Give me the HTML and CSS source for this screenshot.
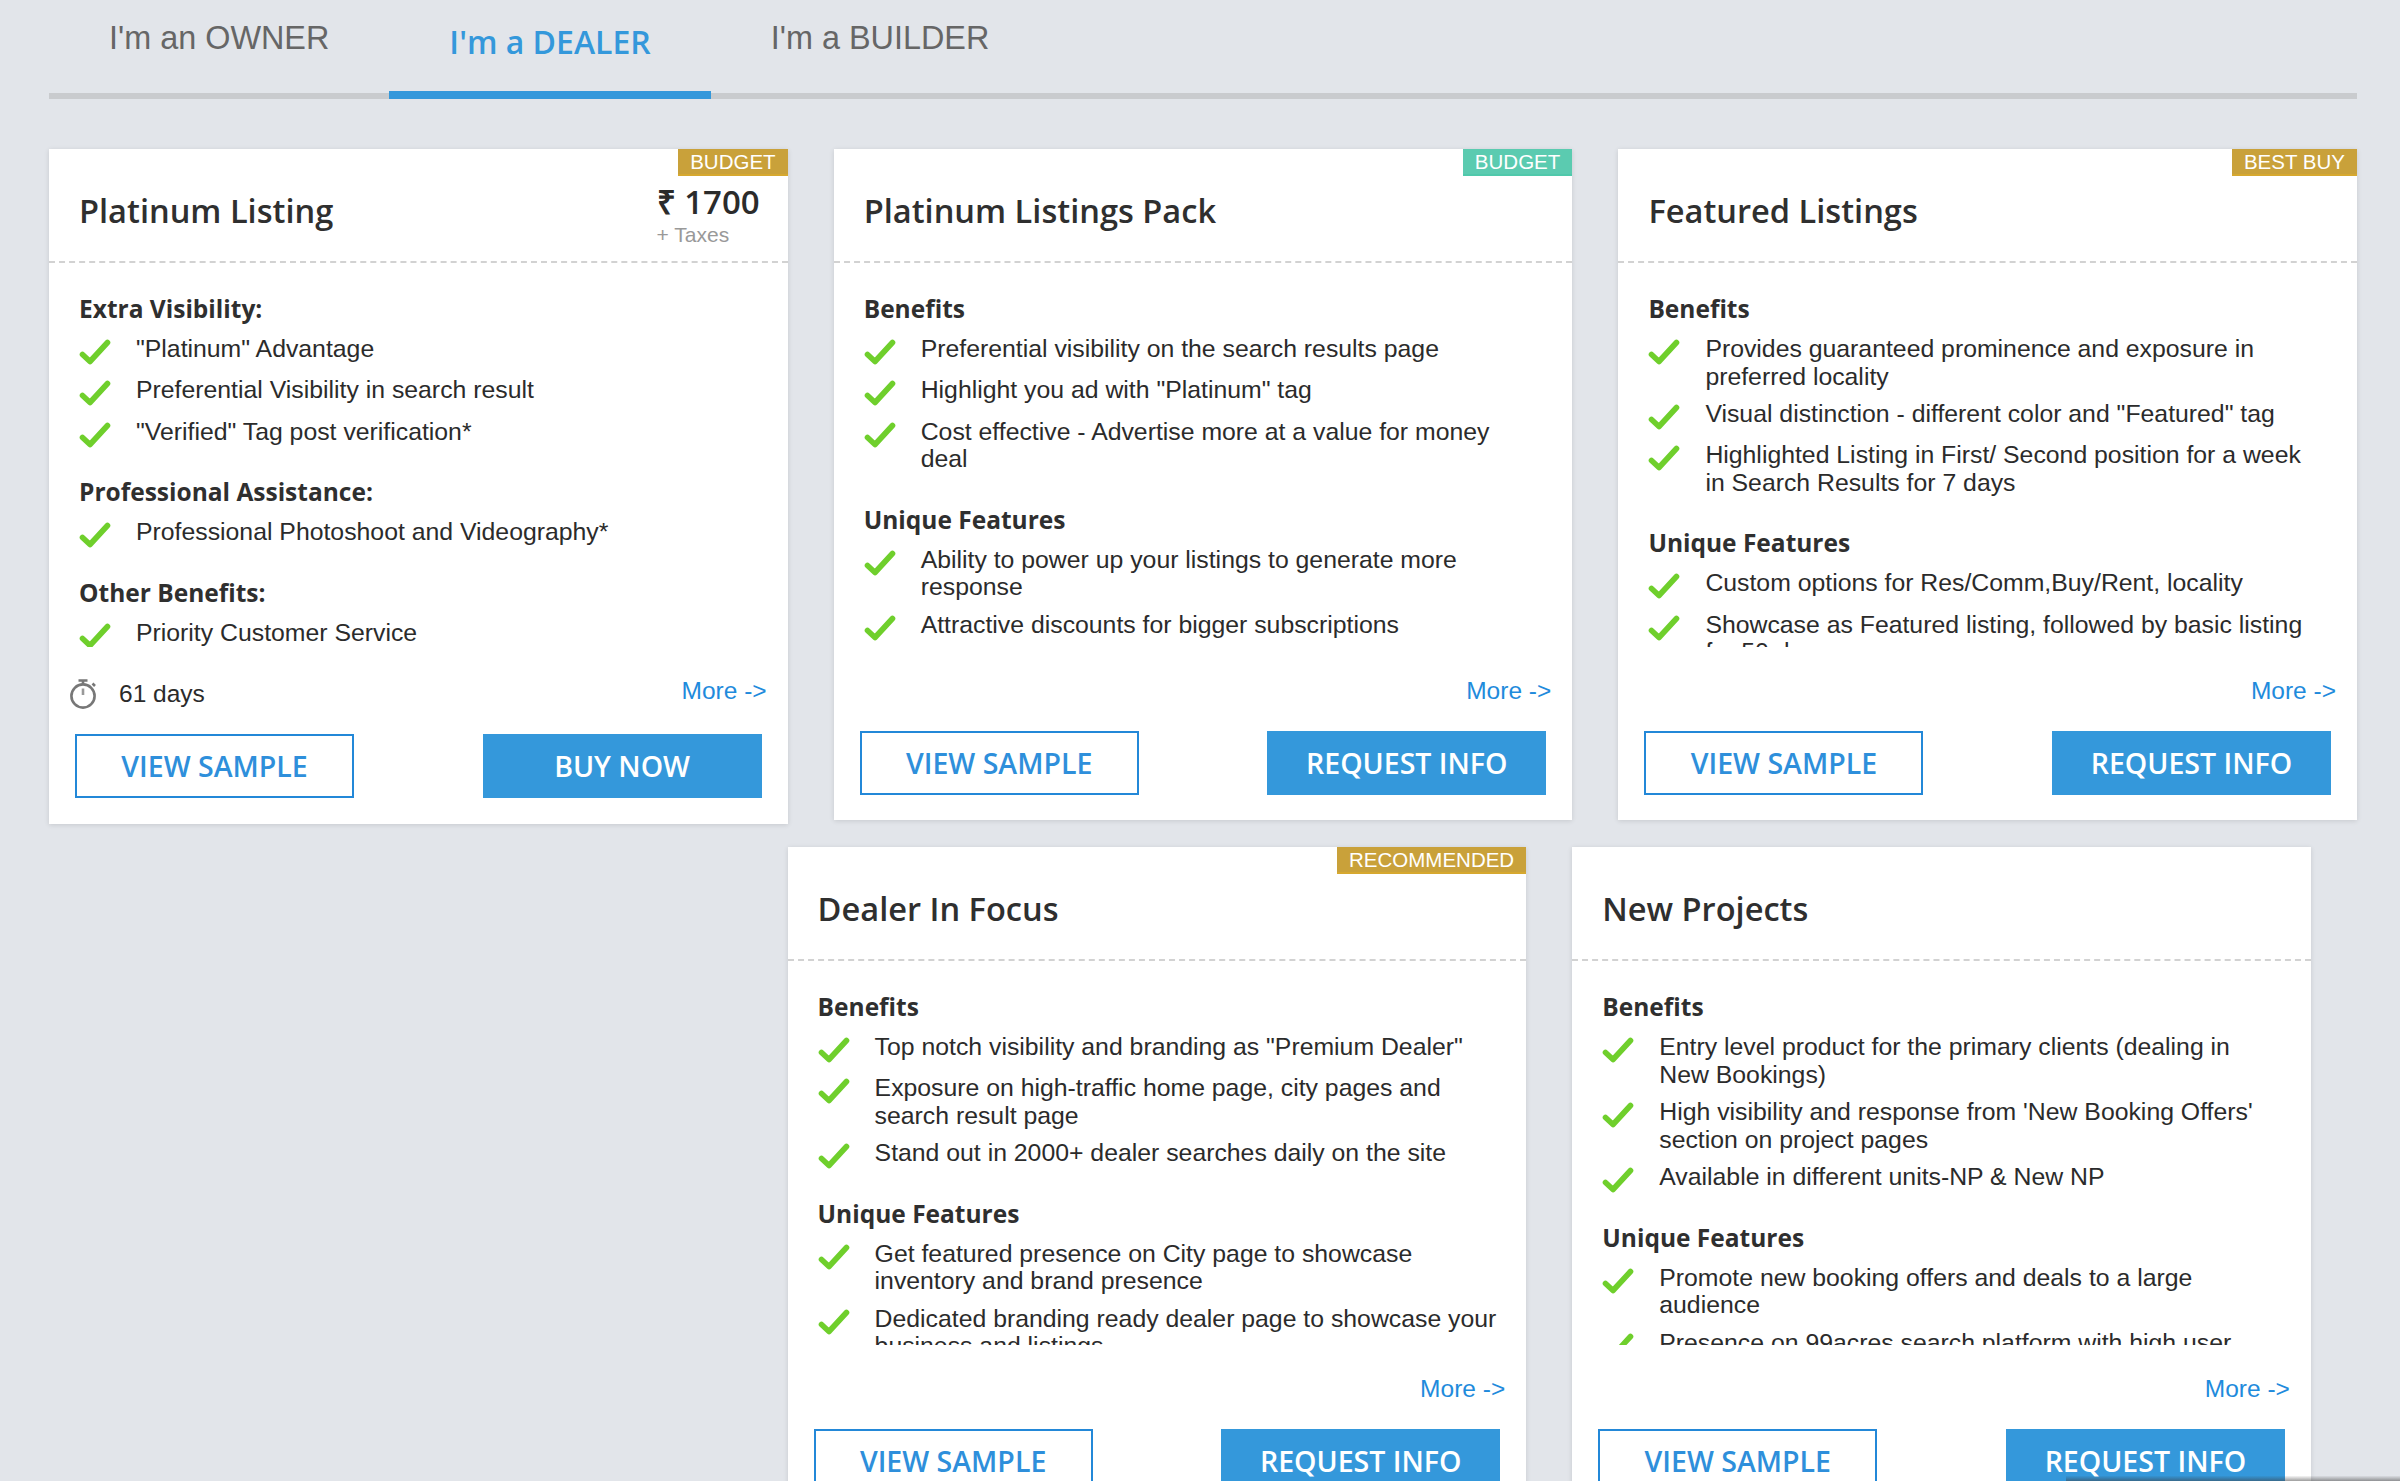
FILE: index.html
```html
<!DOCTYPE html>
<html lang="en">
<head>
<meta charset="utf-8">
<title>Dealer packages</title>
<link rel="stylesheet" href="styles.css">
</head>
<body>
<svg class="defs" width="0" height="0" aria-hidden="true">
  <symbol id="tick" viewBox="0 0 32 26">
    <path d="M3.5 15.5 L11 22.5 L28.5 3.5" fill="none" stroke="#6fcf2c" stroke-width="5.6" stroke-linecap="round" stroke-linejoin="round"/>
  </symbol>
</svg>
<main class="page">
  <nav class="tabs">
    <a class="tab">I'm an OWNER</a>
    <a class="tab tab-active">I'm a DEALER</a>
    <a class="tab">I'm a BUILDER</a>
  </nav>

  <div class="row">
    <section class="card card-tall">
      <span class="badge badge-gold">BUDGET</span>
      <header class="card-head">
        <h2 class="card-title">Platinum Listing</h2>
        <div class="price">
          <div class="price-value">₹ 1700</div>
          <div class="price-tax">+ Taxes</div>
        </div>
      </header>
      <div class="card-body">
        <h3 class="group-title">Extra Visibility:</h3>
        <ul class="list">
          <li class="item"><svg class="tick"><use href="#tick"/></svg><span>"Platinum" Advantage</span></li>
          <li class="item"><svg class="tick"><use href="#tick"/></svg><span>Preferential Visibility in search result</span></li>
          <li class="item"><svg class="tick"><use href="#tick"/></svg><span>"Verified" Tag post verification*</span></li>
        </ul>
        <h3 class="group-title">Professional Assistance:</h3>
        <ul class="list">
          <li class="item"><svg class="tick"><use href="#tick"/></svg><span>Professional Photoshoot and Videography*</span></li>
        </ul>
        <h3 class="group-title">Other Benefits:</h3>
        <ul class="list">
          <li class="item"><svg class="tick"><use href="#tick"/></svg><span>Priority Customer Service</span></li>
        </ul>
      </div>
      <div class="more-row">
        <span class="duration">
          <svg class="clock" viewBox="0 0 28 30"><g fill="none" stroke="#777" stroke-width="2.6"><circle cx="14" cy="17" r="11.6"/><path d="M9.5 1.5h9M14 2v3M23.5 4.5l2.5 2.5"/></g><path d="M14 9.5v6.5" stroke="#999" stroke-width="2.6"/></svg>
          61 days
        </span>
        <a class="more">More -&gt;</a>
      </div>
      <div class="actions">
        <a class="btn btn-outline">VIEW SAMPLE</a>
        <a class="btn btn-solid">BUY NOW</a>
      </div>
    </section>

    <section class="card">
      <span class="badge badge-teal">BUDGET</span>
      <header class="card-head"><h2 class="card-title">Platinum Listings Pack</h2></header>
      <div class="card-body">
        <h3 class="group-title">Benefits</h3>
        <ul class="list">
          <li class="item"><svg class="tick"><use href="#tick"/></svg><span>Preferential visibility on the search results page</span></li>
          <li class="item"><svg class="tick"><use href="#tick"/></svg><span>Highlight you ad with "Platinum" tag</span></li>
          <li class="item item-wrap"><svg class="tick"><use href="#tick"/></svg><span>Cost effective - Advertise more at a value for money<br>deal</span></li>
        </ul>
        <h3 class="group-title">Unique Features</h3>
        <ul class="list">
          <li class="item item-wrap"><svg class="tick"><use href="#tick"/></svg><span>Ability to power up your listings to generate more response</span></li>
          <li class="item"><svg class="tick"><use href="#tick"/></svg><span>Attractive discounts for bigger subscriptions</span></li>
        </ul>
      </div>
      <div class="more-row"><a class="more">More -&gt;</a></div>
      <div class="actions">
        <a class="btn btn-outline">VIEW SAMPLE</a>
        <a class="btn btn-solid">REQUEST INFO</a>
      </div>
    </section>

    <section class="card">
      <span class="badge badge-gold">BEST BUY</span>
      <header class="card-head"><h2 class="card-title">Featured Listings</h2></header>
      <div class="card-body">
        <h3 class="group-title">Benefits</h3>
        <ul class="list">
          <li class="item item-wrap"><svg class="tick"><use href="#tick"/></svg><span>Provides guaranteed prominence and exposure in preferred locality</span></li>
          <li class="item"><svg class="tick"><use href="#tick"/></svg><span>Visual distinction - different color and "Featured" tag</span></li>
          <li class="item item-wrap"><svg class="tick"><use href="#tick"/></svg><span>Highlighted Listing in First/ Second position for a week<br>in Search Results for 7 days</span></li>
        </ul>
        <h3 class="group-title">Unique Features</h3>
        <ul class="list">
          <li class="item"><svg class="tick"><use href="#tick"/></svg><span>Custom options for Res/Comm,Buy/Rent, locality</span></li>
          <li class="item item-wrap"><svg class="tick"><use href="#tick"/></svg><span>Showcase as Featured listing, followed by basic listing for 50 days</span></li>
        </ul>
      </div>
      <div class="more-row"><a class="more">More -&gt;</a></div>
      <div class="actions">
        <a class="btn btn-outline">VIEW SAMPLE</a>
        <a class="btn btn-solid">REQUEST INFO</a>
      </div>
    </section>
  </div>

  <div class="row row-second">
    <section class="card">
      <span class="badge badge-gold">RECOMMENDED</span>
      <header class="card-head"><h2 class="card-title">Dealer In Focus</h2></header>
      <div class="card-body">
        <h3 class="group-title">Benefits</h3>
        <ul class="list">
          <li class="item"><svg class="tick"><use href="#tick"/></svg><span>Top notch visibility and branding as "Premium Dealer"</span></li>
          <li class="item item-wrap"><svg class="tick"><use href="#tick"/></svg><span>Exposure on high-traffic home page, city pages and search result page</span></li>
          <li class="item"><svg class="tick"><use href="#tick"/></svg><span>Stand out in 2000+ dealer searches daily on the site</span></li>
        </ul>
        <h3 class="group-title">Unique Features</h3>
        <ul class="list">
          <li class="item item-wrap"><svg class="tick"><use href="#tick"/></svg><span>Get featured presence on City page to showcase inventory and brand presence</span></li>
          <li class="item item-wrap"><svg class="tick"><use href="#tick"/></svg><span>Dedicated branding ready dealer page to showcase your business and listings</span></li>
        </ul>
      </div>
      <div class="more-row"><a class="more">More -&gt;</a></div>
      <div class="actions">
        <a class="btn btn-outline">VIEW SAMPLE</a>
        <a class="btn btn-solid">REQUEST INFO</a>
      </div>
    </section>

    <section class="card">
      <header class="card-head"><h2 class="card-title">New Projects</h2></header>
      <div class="card-body">
        <h3 class="group-title">Benefits</h3>
        <ul class="list">
          <li class="item item-wrap"><svg class="tick"><use href="#tick"/></svg><span>Entry level product for the primary clients (dealing in New Bookings)</span></li>
          <li class="item item-wrap"><svg class="tick"><use href="#tick"/></svg><span>High visibility and response from 'New Booking Offers' section on project pages</span></li>
          <li class="item"><svg class="tick"><use href="#tick"/></svg><span>Available in different units-NP &amp; New NP</span></li>
        </ul>
        <h3 class="group-title">Unique Features</h3>
        <ul class="list">
          <li class="item item-wrap"><svg class="tick"><use href="#tick"/></svg><span>Promote new booking offers and deals to a large audience</span></li>
          <li class="item item-wrap"><svg class="tick"><use href="#tick"/></svg><span>Presence on 99acres search platform with high user traffic</span></li>
        </ul>
      </div>
      <div class="more-row"><a class="more">More -&gt;</a></div>
      <div class="actions">
        <a class="btn btn-outline">VIEW SAMPLE</a>
        <a class="btn btn-solid">REQUEST INFO</a>
      </div>
    </section>
  </div>
</main>
<div class="edge-shadow"></div>
</body>
</html>
```
FILE: styles.css
```css
* { box-sizing: border-box; }
html, body { margin: 0; height: 1481px; overflow: hidden; }
body { background: #e2e5ea; font-family: "Liberation Sans", Arial, sans-serif; color: #2b2b2b; position: relative; }
.defs { position: absolute; }
.page { padding: 0 43px 0 49px; }

.tabs { display: flex; height: 99px; border-bottom: 6px solid #c9cbce; }
.tab { padding: 17px 60px 0; font-size: 32.4px; line-height: 42px; color: #666; height: 99px; }
.tab-active { padding-top: 21px; border-bottom: 8px solid #3498db; font-family: "Open Sans", sans-serif; font-weight: 600; font-size: 32px; color: #3498db; }

.row { display: flex; align-items: flex-start; gap: 46.1px; margin-top: 50px; }
.row-second { margin-top: 23px; margin-left: 738.6px; }

.card { position: relative; width: 738.6px; height: 671px; background: #fff; box-shadow: 0 1px 5px rgba(0,0,0,.12); flex: none; }
.card-tall { height: 675px; }
.badge { position: absolute; top: 0; right: 0; padding: 0 12px; height: 27px; font-size: 20.5px; line-height: 25px; color: #fff; }
.badge-gold { background: #c9a13a; border-bottom: 2px solid #d6a82f; }
.badge-teal { background: #5bcbb0; border-bottom: 2px solid #4fc9ab; }

.card-head { display: flex; justify-content: space-between; align-items: flex-start; height: 114px; padding: 0 30px; border-bottom: 2px dashed #d2d2d2; }
.card-title { margin: 40px 0 0; font-family: "Open Sans", sans-serif; font-size: 32.6px; line-height: 44px; font-weight: 600; color: #2f2f2f; }
.price { width: 101px; margin-top: 32px; }
.price-value { font-family: "Open Sans", sans-serif; font-size: 33px; line-height: 41px; font-weight: 600; color: #2b2b2b; white-space: nowrap; }
.price-tax { font-size: 21px; line-height: 25px; color: #999; }

.card-body { height: 383.5px; padding: 31px 29px 0 30px; overflow: hidden; }
.group-title { margin: 0 0 11px; font-family: "Open Sans", sans-serif; font-size: 24.5px; line-height: 30px; font-weight: 700; color: #2f2f2f; }
.list { margin: 0 0 32px; padding: 0; list-style: none; }
.item { display: flex; font-size: 24.8px; line-height: 27.5px; margin-bottom: 13.8px; color: #2b2b2b; }
.item-wrap { margin-bottom: 10px; }
.tick { flex: none; width: 32px; height: 26px; margin: 4px 25px -4px 0; }

.more-row { display: flex; justify-content: space-between; align-items: flex-start; height: 36px; padding: 0 21px 0 20px; margin-top: 30px; }
.more-row .more { margin-left: auto; }
.more { font-size: 24.5px; line-height: 28px; color: #1f8bdc; }
.duration { display: flex; align-items: center; font-size: 24.5px; line-height: 30px; margin-top: 2px; color: #2b2b2b; }
.clock { width: 28px; height: 30px; margin-right: 22px; }

.actions { display: flex; justify-content: space-between; padding: 0 26px; margin-top: 18px; }
.card-tall .actions { margin-top: 21.5px; }
.btn { display: block; width: 279px; height: 64px; text-align: center; font-family: "Open Sans", sans-serif; font-size: 28.5px; line-height: 60px; font-weight: 600; border: 2px solid #2388d8; }
.btn-outline { background: #fff; color: #2e8fdb; }
.btn-solid { background: #3498db; border-color: #3498db; color: #fff; }

.edge-shadow { position: absolute; left: 2066px; right: 0; bottom: 0; height: 5px; background: linear-gradient(to bottom, rgba(60,60,60,.05), rgba(60,60,60,.5)); }
```
